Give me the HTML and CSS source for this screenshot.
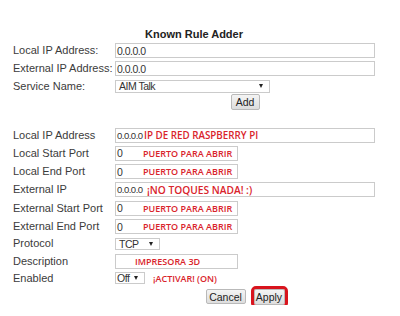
FILE: index.html
```html
<!DOCTYPE html>
<html lang="en">
<head>
    <meta charset="UTF-8">
    <title>Known Rule Adder</title>
    <link rel="stylesheet" href="styles.css">
</head>
<body>
    <div class="page">
        <h1 class="title">Known Rule Adder</h1>

        <!-- Known rule -->
        <div class="form-grid">
            <span class="label">Local IP Address:</span>
            <div class="field wide">0.0.0.0</div>

            <span class="label">External IP Address:</span>
            <div class="field wide">0.0.0.0</div>

            <span class="label">Service Name:</span>
            <div class="select service">AIM Talk<span class="arrow"></span></div>
        </div>
        <div class="actions add-row">
            <button class="btn add">Add</button>
        </div>

        <!-- Custom rule -->
        <div class="form-grid custom">
            <span class="label">Local IP Address</span>
            <div class="field wide"><span class="val ip-local">0.0.0.0</span><span class="note mid">IP DE RED RASPBERRY PI</span></div>

            <span class="label">Local Start Port</span>
            <div class="field narrow"><span class="val port">0</span><span class="note">PUERTO PARA ABRIR</span></div>

            <span class="label">Local End Port</span>
            <div class="field narrow"><span class="val port">0</span><span class="note">PUERTO PARA ABRIR</span></div>

            <span class="label">External IP</span>
            <div class="field wide"><span class="val ip-ext">0.0.0.0</span><span class="note big">¡NO TOQUES NADA! :)</span></div>

            <span class="label">External Start Port</span>
            <div class="field narrow"><span class="val port">0</span><span class="note">PUERTO PARA ABRIR</span></div>

            <span class="label">External End Port</span>
            <div class="field narrow"><span class="val port">0</span><span class="note">PUERTO PARA ABRIR</span></div>

            <span class="label">Protocol</span>
            <div class="select small protocol">TCP<span class="arrow"></span></div>

            <span class="label">Description</span>
            <div class="field narrow"><span class="val empty"></span><span class="note">IMPRESORA 3D</span></div>

            <span class="label">Enabled</span>
            <div class="inline">
                <div class="select small enabled">Off<span class="arrow"></span></div>
                <span class="note after">¡ACTIVAR! (ON)</span>
            </div>
        </div>
        <div class="actions submit-row">
            <button class="btn cancel">Cancel</button>
            <button class="btn apply">Apply</button>
        </div>
    </div>
</body>
</html>
```

FILE: styles.css
```css
/* General Styles */
body {
    margin: 0;
    padding: 0;
    background: #FFFFFF;
    color: #3B3B3B;
    font-family: 'Liberation Sans', Arial, sans-serif;
    font-size: 11px;
}

.page {
    width: 362px;
    padding: 28px 0 0 13px;
}

.title {
    margin: 0 0 2px;
    font-size: 11px;
    line-height: 13px;
    font-weight: bold;
    text-align: center;
    color: #222;
}

/* Form rows */
.form-grid {
    display: grid;
    grid-template-columns: 102px 260px;
    row-gap: 3.3px;
    align-items: center;
}

.form-grid.custom {
    margin-top: 18px;
}

.label {
    line-height: 13px;
    white-space: nowrap;
}

.field, .select {
    box-sizing: border-box;
    display: flex;
    align-items: center;
    border: 1px solid #CBCBCB;
    background: #FFFFFF;
    color: #333;
    font-size: 10.5px;
    letter-spacing: -0.5px;
    white-space: nowrap;
}

.field {
    height: 15px;
    padding-left: 1px;
}

.field.wide { width: 260px; }
.field.narrow { width: 123px; }

.val { flex: none; }
.val.ip-local { width: 27px; font-size: 9.5px; }
.val.ip-ext { width: 30px; font-size: 9.5px; }
.val.port { width: 26px; }
.val.empty { width: 18px; }

.note {
    font-family: 'Open Sans', sans-serif;
    font-size: 9px;
    font-weight: 600;
    letter-spacing: 0;
    color: #D9232B;
}

.note.mid {
    font-size: 9.8px;
}

.note.big {
    font-size: 10.2px;
}

.note.after {
    margin-left: 8px;
}

/* Selects */
.select {
    position: relative;
    height: 13px;
    padding-left: 3px;
}

.select.small {
    height: 12px;
    padding-left: 3px;
}

.select.service { width: 155px; }
.select.protocol { width: 45px; }
.select.enabled { width: 30px; padding-left: 1px; }

.arrow {
    position: absolute;
    right: 6px;
    top: 50%;
    margin-top: -2px;
    border-left: 2.5px solid transparent;
    border-right: 2.5px solid transparent;
    border-top: 4px solid #222;
}

.inline {
    display: flex;
    align-items: center;
}

/* Buttons */
.actions {
    display: flex;
    justify-content: center;
    gap: 5px;
    width: 260px;
    margin-left: 102px;
}

.add-row { margin-top: 1px; }
.submit-row { margin-top: 4px; }

.btn {
    box-sizing: border-box;
    height: 16px;
    padding: 0;
    border: 1px solid #B9B9B9;
    border-radius: 2px;
    background: linear-gradient(#F4F4F4, #DDDDDD);
    color: #222;
    font-family: 'Liberation Sans', Arial, sans-serif;
    font-size: 10.5px;
    line-height: 14px;
}

.btn.add { width: 29px; }

.btn.cancel {
    width: 40px;
    height: 15px;
}

.btn.apply {
    width: 31px;
    height: 16px;
    margin-left: 3px;
    outline: 3px solid #D8141D;
}
```
